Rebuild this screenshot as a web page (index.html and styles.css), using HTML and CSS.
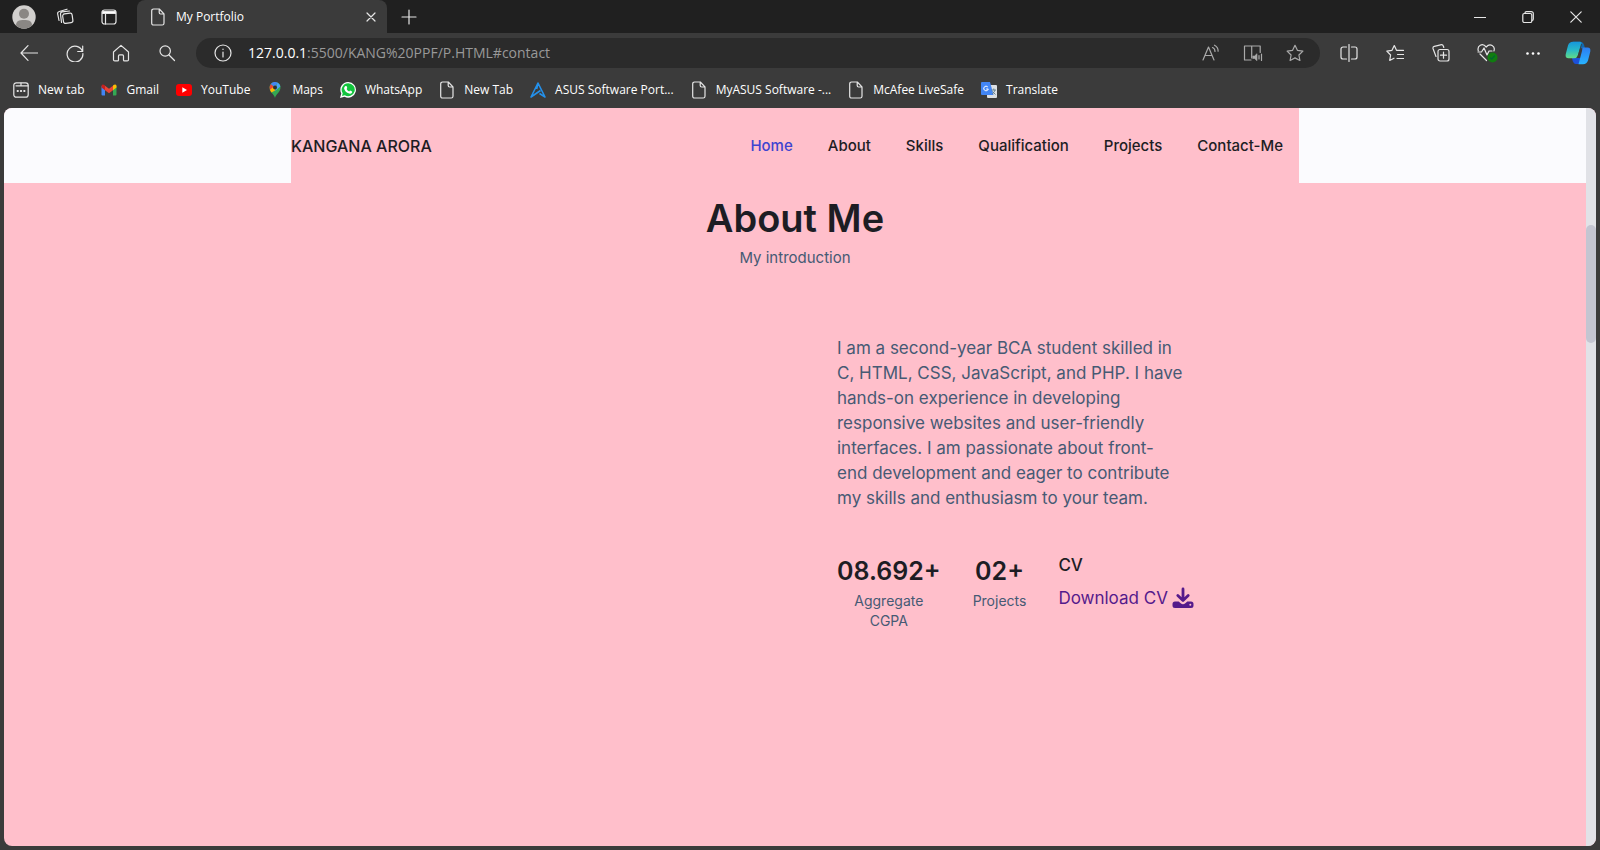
FILE: index.html
```html
<!DOCTYPE html>
<html lang="en">
<head>
<meta charset="utf-8">
<title>My Portfolio</title>
<link rel="stylesheet" href="styles.css">
</head>
<body>
<svg class="defs" aria-hidden="true">
  <symbol id="file" viewBox="0 0 16 18"><path d="M3.5 1h5.800L14 5.800v9.400a1.800 1.800 0 0 1-1.800 1.800H3.500a1.800 1.800 0 0 1-1.800-1.800V2.800A1.800 1.800 0 0 1 3.500 1zM9.200 1v3.500A1.500 1.500 0 0 0 10.700 6H14"/></symbol>
</svg>
<div class="titlebar">
  <button class="slot profile" aria-label="Profile"><svg width="24" height="24" viewBox="0 0 24 24"><circle cx="12" cy="12" r="11.700" fill="#d2d0ce"/><circle cx="12" cy="8.700" r="5" fill="#8a8784"/><path d="M4 20.500c0-4.500 3-5.500 8-5.500s8 1 8 5.500a11.700 11.700 0 0 1-16 0z" fill="#8a8784"/></svg></button>
  <button class="slot" aria-label="Workspaces"><svg class="line" width="18" height="18" viewBox="0 0 18 18"><rect x="7" y="5.500" width="9.500" height="9.500" rx="2" transform="rotate(-8 12 10)"/><path d="M5.500 14.500 4.500 6A2 2 0 0 1 6.200 3.900L13.500 3M3 12.500 1.700 6A2 2 0 0 1 3.300 3.500L11 1.200"/></svg></button>
  <button class="slot" aria-label="Tab actions"><svg class="line" width="16" height="16" viewBox="0 0 16 16"><rect x="1" y="1" width="14" height="14" rx="2.500"/><path d="M1.500 2.500h13v2h-13z" fill="#fff"/><path d="M4.500 5v10"/></svg></button>
  <div class="tab">
    <svg class="line" width="16" height="18"><use href="#file"/></svg>
    <span class="tab-title">My Portfolio</span>
    <button aria-label="Close tab"><svg class="line" width="10" height="10" viewBox="0 0 10 10"><path d="M1 1l8 8M9 1L1 9"/></svg></button>
  </div>
  <button class="slot" aria-label="New tab"><svg class="line" width="16" height="16" viewBox="0 0 16 16"><path d="M8 1v14M1 8h14"/></svg></button>
  <div class="window-controls">
    <button aria-label="Minimize"><svg class="line" width="12" height="12" viewBox="0 0 12 12"><path d="M.5 6.500h11"/></svg></button>
    <button aria-label="Restore"><svg class="line" width="12" height="12" viewBox="0 0 12 12"><rect x=".8" y="2.500" width="9" height="9" rx="1.500"/><path d="M3 2.500V2A1.500 1.500 0 0 1 4.500.6h4.800a2 2 0 0 1 2 2V8A1.500 1.500 0 0 1 10 9.500"/></svg></button>
    <button aria-label="Close window"><svg class="line" width="12" height="12" viewBox="0 0 12 12"><path d="M.8.8l10.400 10.400M11.200.8L.8 11.200"/></svg></button>
  </div>
</div>

<div class="toolbar">
  <div class="tools">
    <button aria-label="Back"><svg class="line" width="18" height="18" viewBox="0 0 18 18"><path d="M17.500 9H1M8 1.700L1 9l7 7.300"/></svg></button>
    <button aria-label="Refresh"><svg class="line" width="18" height="18" viewBox="0 0 18 18"><path d="M16.500 7.500a7.900 7.900 0 1 0 .4 2M16.700 2v5.500h-5"/></svg></button>
    <button aria-label="Home"><svg class="line" width="18" height="18" viewBox="0 0 18 18"><path d="M1.500 8 9 1.400 16.500 8v7.700a1.200 1.200 0 0 1-1.200 1.200h-2.800a1 1 0 0 1-1-1v-4a1 1 0 0 0-1-1h-3a1 1 0 0 0-1 1v4a1 1 0 0 1-1 1H2.700a1.200 1.200 0 0 1-1.200-1.200z"/></svg></button>
    <button aria-label="Search"><svg class="line" width="18" height="18" viewBox="0 0 18 18"><circle cx="7.200" cy="7" r="5.200"/><path d="M11 11l5.500 5.500"/></svg></button>
  </div>
  <div class="address">
    <button aria-label="Site information"><svg class="line" width="18" height="18" viewBox="0 0 18 18"><circle cx="9" cy="9" r="8"/><path d="M9 8v5M9 5v.5"/></svg></button>
    <a class="url" href="#contact"><b>127.0.0.1</b>:5500/KANG%20PPF/P.HTML#contact</a>
    <div class="page-tools">
      <button aria-label="Read aloud"><svg class="line" width="18" height="18" viewBox="0 0 18 18"><path d="M1 16 6.500 3 12 16M3 11.500h7M10.500 3.500q2.500 1 2.500 4M12.500 1.200q3.800 2 3.600 6"/></svg></button>
      <button aria-label="Immersive reader"><svg class="line" width="20" height="18" viewBox="0 0 20 18"><path d="M8 16H1.500V2h7.200v12M8.700 2h8.500v6.500"/><path d="M10 12h1.500l2.500-2.300v7L11.500 14.500H10z" fill="#aaa" stroke-width=".6"/><path d="M16 11.500v3.500M18.500 10v6.500"/></svg></button>
      <button aria-label="Add to favorites"><svg class="line" width="18" height="18" viewBox="0 0 18 18"><path d="M9 1.300l2.400 5 5.500.8-4 3.900 1 5.500L9 13.900l-4.900 2.600 1-5.500-4-3.900 5.500-.8z"/></svg></button>
    </div>
  </div>
  <div class="tools">
    <button aria-label="Split screen"><svg class="line" width="18" height="18" viewBox="0 0 18 18"><path d="M9 .5v17M6.500 3H3a2 2 0 0 0-2 2v8a2 2 0 0 0 2 2h3.500M11.500 3H15a2 2 0 0 1 2 2v8a2 2 0 0 1-2 2h-3.500"/></svg></button>
    <button aria-label="Favorites"><svg class="line" width="18" height="18" viewBox="0 0 18 18"><path d="M17.500 6.300h-7L8.300 1.500 6 6.300.8 7.200l3.800 3.800-.9 5.500L8 14.200M11.500 10.500h6M11 14.500h6.500"/></svg></button>
    <button aria-label="Collections"><svg class="line" width="18" height="18" viewBox="0 0 18 18"><rect x="6" y="5.500" width="11" height="11.500" rx="2"/><path d="M11.500 8.200v6M8.500 11.200h6M4 12.500 1.100 4.800A2 2 0 0 1 2.300 2.300L8.500.8a2.500 2.500 0 0 1 3 1.700l.3 1"/></svg></button>
    <button aria-label="Browser essentials"><svg class="line" width="22" height="20" viewBox="0 0 22 20"><path d="M10.500 17.500 4 11M2.300 8C.8 2.500 6.500-.5 10.200 4c3.800-4.500 9.500-1 7.700 4"/><path d="M2 9h3.500L8 5l3 7 2-4h3"/><circle cx="16.500" cy="14.500" r="5" fill="#107c10" stroke="none"/><path d="M14.500 15l1.200 1 2.800-3" stroke="#063"/></svg></button>
    <button aria-label="Settings and more"><svg width="16" height="18" viewBox="0 0 16 18" fill="#fff"><circle cx="2.500" cy="9.500" r="1.300"/><circle cx="8" cy="9.500" r="1.300"/><circle cx="13.500" cy="9.500" r="1.300"/></svg></button>
    <button class="copilot" aria-label="Copilot"><svg width="26" height="24" viewBox="0 0 26 24"><defs><linearGradient id="ca" x1="0" y1="0" x2="0" y2="1"><stop offset="0" stop-color="#1596dc"/><stop offset=".5" stop-color="#28b8c8"/><stop offset="1" stop-color="#62dc86"/></linearGradient><linearGradient id="cb" x1="0" y1="0" x2="0" y2="1"><stop offset="0" stop-color="#2c7df2"/><stop offset="1" stop-color="#28b4ff"/></linearGradient></defs><path d="M8 .8h7.500q3.500 0 4.500 6.500h-6z" fill="#1268ae"/><path d="M7 17h9l-2 6h-3q-3 0-4-6z" fill="#1c50d8"/><path d="M8 .8h7q2 0 1.300 2.200l-3.500 11.500q-.9 2.700-3.800 2.700H3.500q-3.500 0-2.800-4L3 4.500Q4.200.8 8 .8z" fill="url(#ca)"/><path d="M17.500 6.500h5q3.500 0 2.800 4L23 19.500q-1.200 3.700-5 3.700h-4.500L17 10z" fill="url(#cb)"/><path d="M16.500 3 13 15.500" stroke="#3b3b3b" stroke-width=".8"/></svg></button>
  </div>
</div>

<nav class="bookmarks" aria-label="Bookmarks">
  <a href="#"><svg class="line" width="16" height="16" viewBox="0 0 16 16"><rect x=".8" y=".8" width="14.400" height="14.400" rx="2.500"/><path d="M3 3.800h5V1M8 3.800h7"/><path d="M4.500 9h.5M7.800 9h.5M11.100 9h.5" stroke-width="1.800"/></svg>New tab</a>
  <a href="#"><svg width="16" height="16" viewBox="0 0 16 16"><path d="M.5 4v8.500q0 1 1 1H4V6.500z" fill="#4285f4"/><path d="M15.500 4v8.500q0 1-1 1H12V6.500z" fill="#34a853"/><path d="M12 3.500l1-.8q2.500-1 2.500 1.300v1.500L12 8.200z" fill="#fbbc04"/><path d="M4 3.700 8 6.800l4-3.100v4.500l-4 3-4-3z" fill="#ea4335"/><path d="M.5 4Q.5 1.700 3 2.700l1 .8v4.700L.5 5.500z" fill="#c5221f"/></svg>Gmail</a>
  <a href="#"><svg width="16" height="16" viewBox="0 0 16 16"><rect y="2" width="16" height="12" rx="3" fill="#f00"/><path d="M6.300 5.300v5.400L11 8z" fill="#fff"/></svg>YouTube</a>
  <a href="#"><svg width="16" height="16" viewBox="0 0 16 16"><path d="M8 16C7 12 2.500 10 2.500 5.500a5.500 5.500 0 0 1 11 0C13.500 10 9 12 8 16z" fill="#34a853"/><path d="M2.900 7.500Q2 4.500 3.800 2L6.500 4 5 9.500z" fill="#ea4335"/><path d="M3.800 2Q7-1.500 11 1L7.500 5z" fill="#4285f4"/><path d="M10.500.6Q13 2 13.400 4.500L8 9z" fill="#4aa4f4"/><path d="M3 7.800 8 3.500v5L4.500 10.500Q3.500 9.500 3 7.800z" fill="#fbbc04"/><circle cx="8" cy="5.500" r="2" fill="#303030"/></svg>Maps</a>
  <a href="#"><svg width="16" height="16" viewBox="0 0 16 16"><path d="M8.200 0a7.800 7.800 0 1 1-3.700 14.700L0 16l1.300-4.400A7.800 7.800 0 0 1 8.200 0z" fill="#fff"/><path d="M8.200 1.300a6.500 6.500 0 1 1-3.400 12L2 14l.7-2.700A6.500 6.500 0 0 1 8.200 1.300z" fill="#12c33c"/><path d="M5.500 4h1l.8 2-.7 1q.8 1.700 2.500 2.400l1-1 2 1v1q-1 1.700-3 1.200-4-1.100-5-5.100 0-2 1.400-2.500z" fill="#fff"/></svg>WhatsApp</a>
  <a href="#"><svg class="line" width="16" height="18"><use href="#file"/></svg>New Tab</a>
  <a href="#"><svg width="16" height="16" viewBox="0 0 16 16" fill="none" stroke="#2490ea" stroke-width="1.600" stroke-linejoin="round"><path d="M6.700 7 8 1l7 14-5.500-3.500M8 1 1 15l9.500-6.500"/></svg>ASUS Software Port...</a>
  <a href="#"><svg class="line" width="16" height="18"><use href="#file"/></svg>MyASUS Software -...</a>
  <a href="#"><svg class="line" width="16" height="18"><use href="#file"/></svg>McAfee LiveSafe</a>
  <a href="#"><svg width="16" height="16" viewBox="0 0 16 16"><rect x="6" y="3" width="10" height="13" rx="1" fill="#dde0e4"/><path d="M1 0h8l3.500 13H1q-1 0-1-1V1q0-1 1-1z" fill="#4285f4"/><path d="M6.800 5A2.300 2.300 0 1 0 7.300 7H5.200" fill="none" stroke="#fff"/><path d="M10.500 8h4.500M12.800 6.500V8M14 8q-.5 2.500-3 4M11.500 9.500l3 3" fill="none" stroke="#607d8b" stroke-width=".9"/></svg>Translate</a>
</nav>

<div class="viewport">
  <div class="page">
    <header>
      <div class="nav">
        <a class="logo" href="#">KANGANA ARORA</a>
        <ul>
          <li><a class="active" href="#home">Home</a></li>
          <li><a href="#about">About</a></li>
          <li><a href="#skills">Skills</a></li>
          <li><a href="#qualification">Qualification</a></li>
          <li><a href="#projects">Projects</a></li>
          <li><a href="#contact">Contact-Me</a></li>
        </ul>
      </div>
    </header>
    <main>
      <h1>About Me</h1>
      <p class="subtitle">My introduction</p>
      <div class="about">
        <div class="about-data">
          <p class="description">I am a second-year BCA student skilled in<br>C, HTML, CSS, JavaScript, and PHP. I have<br>hands-on experience in developing<br>responsive websites and user-friendly<br>interfaces. I am passionate about front-<br>end development and eager to contribute<br>my skills and enthusiasm to your team.</p>
          <div class="info">
            <div class="stat"><strong>08.692+</strong><span>Aggregate<br>CGPA</span></div>
            <div class="stat"><strong>02+</strong><span>Projects</span></div>
            <div class="cv"><span>CV</span><a href="#cv">Download CV<svg width="22" height="22" viewBox="0 0 22 22"><path d="M11 2v11M5.800 8.500 11 13.500l5.200-5" fill="none" stroke="currentColor" stroke-width="2.800" stroke-linecap="round" stroke-linejoin="round"/><path d="M3 14.500h3.700l2 1.800q2.300 1.800 4.600 0l2-1.800H19a2.500 2.500 0 0 1 2.500 2.500v1.500A2.500 2.500 0 0 1 19 21H3A2.500 2.500 0 0 1 .5 18.500V17A2.500 2.500 0 0 1 3 14.500z" fill="currentColor"/><circle cx="18.300" cy="17.800" r="1" fill="#ffbfcb"/></svg></a></div>
          </div>
        </div>
      </div>
    </main>
  </div>
  <div class="scrollbar"><div class="thumb"></div></div>
</div>
</body>
</html>
```
FILE: styles.css
```css
* { box-sizing: border-box; margin: 0; padding: 0; }
body {
  display: flex;
  flex-direction: column;
  min-height: 100vh;
  background: #3b3b3b;
  color: #fff;
  font: 12px/16px "Open Sans", sans-serif;
}
button { display: grid; place-items: center; border: 0; background: none; color: inherit; }
a { color: inherit; text-decoration: none; }
svg { flex: none; display: block; }
.defs { position: absolute; width: 0; height: 0; }
.line { fill: none; stroke: #e6e6e6; stroke-width: 1.2; stroke-linecap: round; stroke-linejoin: round; }

.titlebar { display: flex; height: 33px; background: #202020; }
.slot { width: 44px; }
.titlebar .profile { width: 43px; padding-left: 4px; }
.tab {
  display: flex;
  align-items: center;
  gap: 10px;
  width: 250px;
  margin-left: 6px;
  padding: 0 11px 0 13px;
  border-radius: 8px 8px 0 0;
  background: #3b3b3b;
}
.tab-title { flex: 1; }
.window-controls { display: flex; margin-left: auto; }
.window-controls button { width: 48px; }

.toolbar { display: flex; align-items: center; height: 40px; padding-left: 6px; }
.tools { display: flex; }
.tools button { width: 46px; height: 30px; }
.tools .copilot { width: 44px; }
.address {
  flex: 1;
  display: flex;
  align-items: center;
  height: 30px;
  margin: 0 6px;
  padding-left: 18px;
  border-radius: 15px;
  background: #2b2b2b;
}
.url { flex: 1; margin-left: 16px; color: #999; font-size: 14px; }
.url b { color: #fff; font-weight: 400; }
.page-tools { display: flex; padding-right: 4px; }
.page-tools button { width: 42px; }
.page-tools .line { stroke: #aaa; }

.bookmarks { display: flex; align-items: center; gap: 17px; height: 35px; padding: 0 13px 2px; }
.bookmarks a { display: flex; align-items: center; gap: 9px; white-space: nowrap; }

.viewport {
  flex: 1;
  display: flex;
  margin: 0 4px 4px;
  overflow: hidden;
  border-radius: 8px;
  background: #ffbfcb;
  color: #1d1d24;
  font-family: Inter, sans-serif;
}
.page { flex: 1; }
.page header { background: #fbfbfe; }
.nav {
  display: flex;
  align-items: center;
  justify-content: space-between;
  max-width: 1008px;
  height: 75px;
  margin: 0 auto;
  padding-right: 16px;
  background: #ffbfcb;
  font-weight: 500;
}
.logo { font-size: 16px; }
.nav ul { display: flex; gap: 35px; list-style: none; font-size: 15px; }
.nav .active { color: #3e44d0; }
main { padding-top: 11px; text-align: center; }
h1 { font-size: 38px; line-height: 48px; font-weight: 600; }
.subtitle { margin-top: 4px; color: #465a74; font-size: 15px; line-height: 24px; }
.about { display: grid; grid-template-columns: 1fr 1fr; max-width: 1008px; margin: 0 auto; padding-top: 66px; text-align: left; }
.about-data { grid-column: 2; padding-left: 42px; }
.description { color: #465a74; font-size: 17px; line-height: 25px; white-space: nowrap; }
.info { display: flex; gap: 32px; margin-top: 40px; white-space: nowrap; }
.stat { text-align: center; }
.stat strong { display: block; font-size: 25px; line-height: 40px; font-weight: 600; }
.stat span { display: block; color: #465a74; font-size: 14px; line-height: 20px; }
.cv { font-size: 17px; line-height: 28px; }
.cv span { font-weight: 500; }
.cv a { display: flex; align-items: center; gap: 4px; margin-top: 5px; color: #551a8b; }

.scrollbar { width: 10px; padding-top: 117px; background: #e1e2e7; }
.thumb { height: 118px; border-radius: 5px; background: #c4c5d1; }
```
